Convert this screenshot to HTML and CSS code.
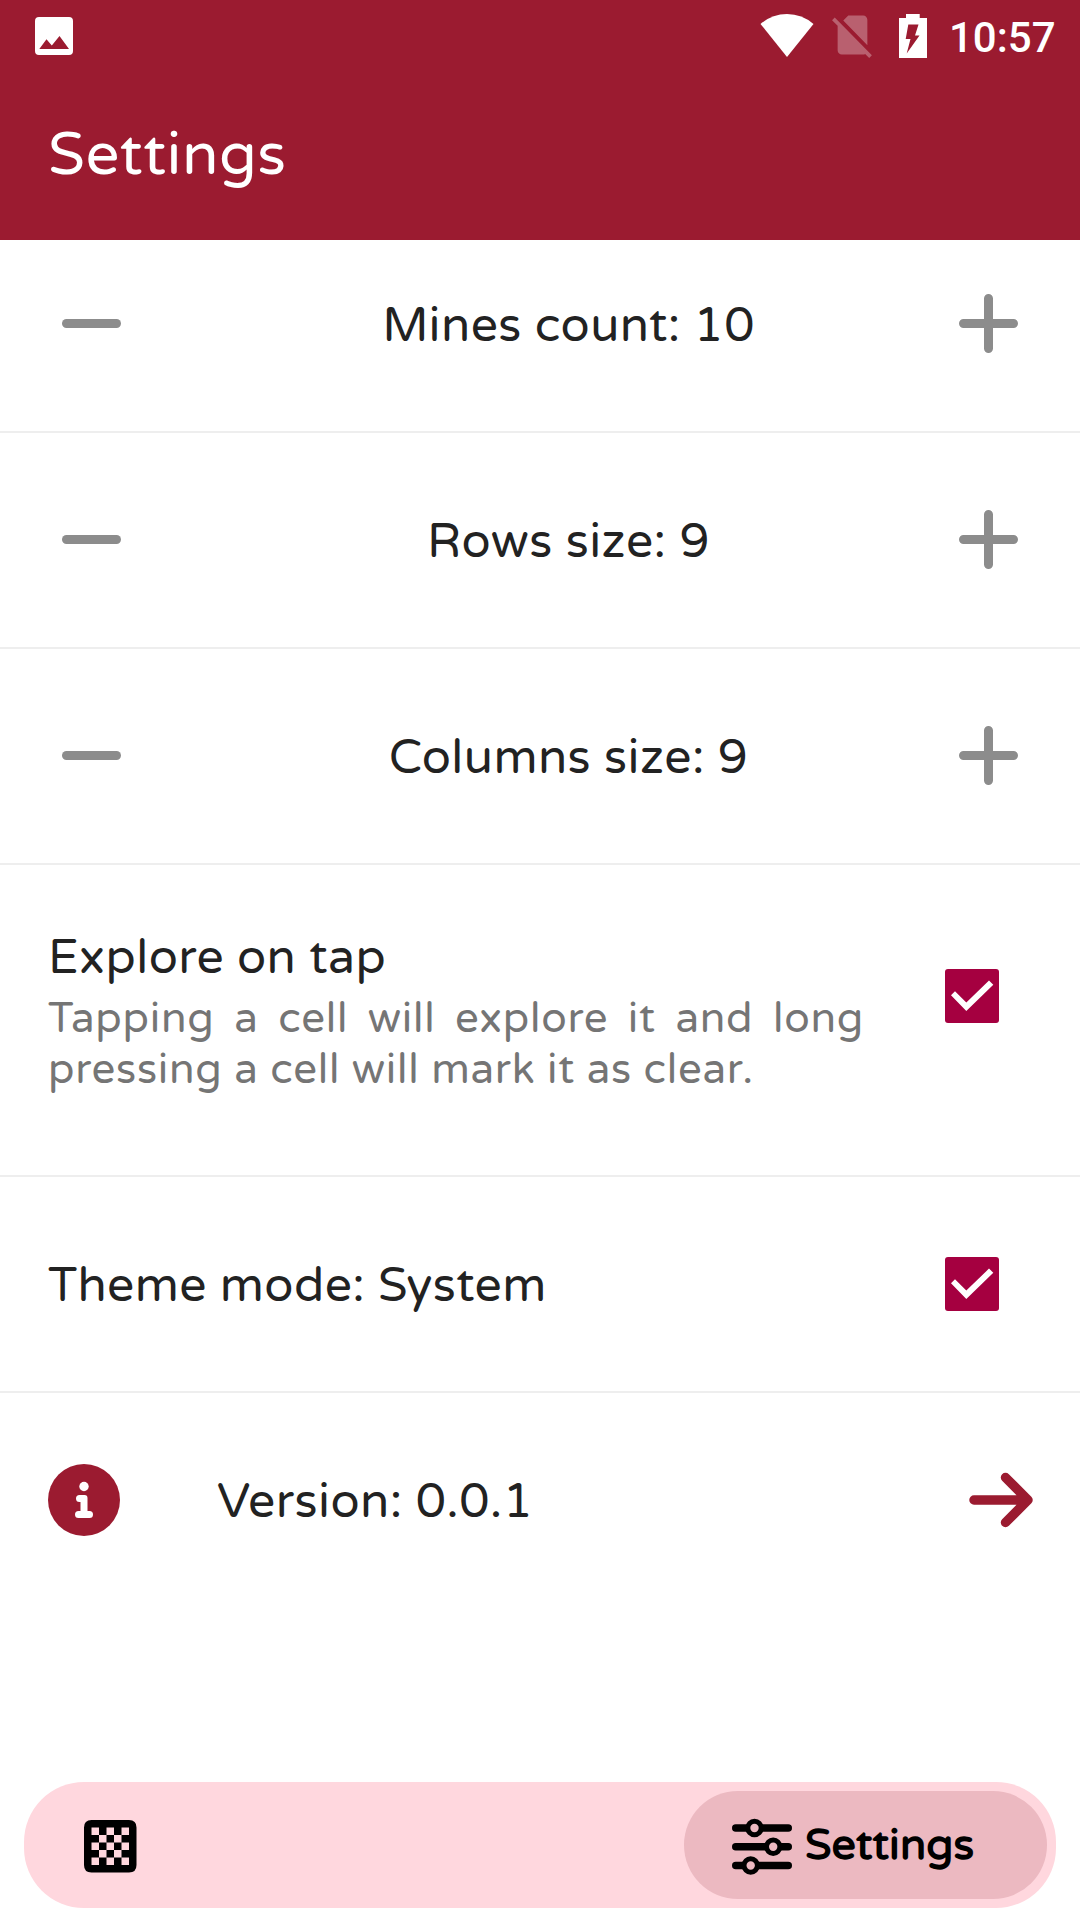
FILE: index.html
```html
<!DOCTYPE html>
<html lang="en">
<head>
<meta charset="utf-8">
<title>Settings</title>
<link rel="stylesheet" href="styles.css">
</head>
<body>
<div class="screen">
  <header class="app-bar">
    <div class="status-bar">
      <svg class="icon-photo" width="38" height="38" viewBox="0 0 38 38"><path fill="#fff" fill-rule="evenodd" d="M4 0H34Q38 0 38 4V34Q38 38 34 38H4Q0 38 0 34V4Q0 0 4 0ZM4.300 32H34L24.500 19L16.800 28.500L11.500 22.300Z"/></svg>
      <div class="status-right">
        <svg class="icon-wifi" width="54" height="43" viewBox="0 0 54 43"><path fill="#fff" d="M0.500 10Q12 0 27 0T53.500 10L27 43Z"/></svg>
        <svg class="icon-sim" width="51" height="52" viewBox="0 0 24 24" preserveAspectRatio="none"><path fill="#fff" d="M18.990 5c0-1.100-.890-2-1.990-2h-7L7.660 5.340 19 16.680 18.990 5zM3.650 3.880L2.380 5.150 5 7.770V19c0 1.100.900 2 2 2h10.010c.350 0 .670-.100.960-.260l1.880 1.880 1.270-1.270L3.650 3.880z"/></svg>
        <svg class="icon-battery" width="28" height="44" viewBox="0 0 28 44"><path fill="#fff" fill-rule="evenodd" d="M7 0H20.700V4H28V44H0V4H7ZM9.300 10.500L6.700 25H11.500L7.700 39.500L20.500 21.500H16L19.500 10.500Z"/></svg>
        <span class="clock">10:57</span>
      </div>
    </div>
    <h1 class="title">Settings</h1>
  </header>

  <main class="viewport">
    <div class="list">
      <div class="row stepper">
        <svg width="59" height="59" viewBox="0 0 59 59"><path class="step" d="M4.500 29.500H54.500"/></svg>
        <span class="label">Mines count: 10</span>
        <svg width="59" height="59" viewBox="0 0 59 59"><path class="step" d="M4.500 29.500H54.500M29.500 4.500V54.500"/></svg>
      </div>
      <div class="row stepper">
        <svg width="59" height="59" viewBox="0 0 59 59"><path class="step" d="M4.500 29.500H54.500"/></svg>
        <span class="label">Rows size: 9</span>
        <svg width="59" height="59" viewBox="0 0 59 59"><path class="step" d="M4.500 29.500H54.500M29.500 4.500V54.500"/></svg>
      </div>
      <div class="row stepper">
        <svg width="59" height="59" viewBox="0 0 59 59"><path class="step" d="M4.500 29.500H54.500"/></svg>
        <span class="label">Columns size: 9</span>
        <svg width="59" height="59" viewBox="0 0 59 59"><path class="step" d="M4.500 29.500H54.500M29.500 4.500V54.500"/></svg>
      </div>
      <div class="row option tall">
        <div class="copy">
          <span class="label">Explore on tap</span>
          <p class="hint">Tapping a cell will explore it and long pressing a cell will mark it as clear.</p>
        </div>
        <svg class="check" width="54" height="54" viewBox="0 0 54 54"><rect width="54" height="54" rx="3" fill="#a50040"/><path fill="#fff" d="M6 26.300L10 22.300L21.300 33.500L44 11.600L48.300 15.700L21.300 42Z"/></svg>
      </div>
      <div class="row option">
        <span class="label">Theme mode: System</span>
        <svg class="check" width="54" height="54" viewBox="0 0 54 54"><rect width="54" height="54" rx="3" fill="#a50040"/><path fill="#fff" d="M6 26.300L10 22.300L21.300 33.500L44 11.600L48.300 15.700L21.300 42Z"/></svg>
      </div>
      <div class="row about">
        <svg width="72" height="72" viewBox="0 0 72 72"><circle cx="36" cy="36" r="36" fill="#9b1b30"/><circle cx="36" cy="22.500" r="4.700" fill="#fff"/><path fill="#fff" d="M31.500 31H36.500Q39.500 31 39.500 34V47H41.500Q45 47 45 50.500T41.500 54H30.500Q27 54 27 50.500T30.500 47H32.500V38H31.500Q28 38 28 34.500T31.500 31Z"/></svg>
        <span class="label">Version: 0.0.1</span>
        <svg width="64" height="56" viewBox="0 0 64 56"><path class="arrow" d="M5 28H59M36.500 5.500L59 28L36.500 50.500"/></svg>
      </div>
    </div>
  </main>

  <nav class="nav">
    <svg class="icon-board" width="52.500" height="52.500" viewBox="0 0 7 7"><path fill-rule="evenodd" d="M1 0H6Q7 0 7 1V6Q7 7 6 7H1Q0 7 0 6V1Q0 0 1 0ZM1 1v1h1v-1zM3 1v1h1v-1zM5 1v1h1v-1zM2 2v1h1v-1zM4 2v1h1v-1zM1 3v1h1v-1zM3 3v1h1v-1zM5 3v1h1v-1zM2 4v1h1v-1zM4 4v1h1v-1zM1 5v1h1v-1zM3 5v1h1v-1zM5 5v1h1v-1z"/></svg>
    <div class="nav-active">
      <svg class="icon-sliders" width="60" height="58" viewBox="0 0 60 58"><path class="slider" d="M3.750 10H56.250M3.750 28.700H56.250M3.750 47.500H56.250"/><g class="knobs"><circle cx="22.500" cy="10" r="6.700"/><circle cx="41.200" cy="28.700" r="6.700"/><circle cx="18.700" cy="47.500" r="6.700"/></g></svg>
      <span class="nav-label">Settings</span>
    </div>
  </nav>
</div>
</body>
</html>
```
FILE: styles.css
```css
* { box-sizing: border-box; }
body { margin: 0; background: #fff; }
svg { display: block; flex: none; }

.screen {
  width: 1080px;
  height: 1920px;
  display: flex;
  flex-direction: column;
  overflow: hidden;
  background: #fff;
  font-family: "Varela Round", "Noto Sans", sans-serif;
  color: #222;
}

.app-bar { height: 240px; flex: none; background: #9b1b30; color: #fff; }
.status-bar {
  height: 72px;
  display: flex;
  justify-content: space-between;
  align-items: flex-start;
  padding: 0 24px 0 35px;
}
.status-right { display: flex; align-items: flex-start; }
.icon-photo { margin-top: 17px; }
.icon-wifi { margin-top: 14px; }
.icon-sim { margin: 9px 21px 0 13px; opacity: .3; }
.icon-battery { margin-top: 14px; }
.clock {
  width: 107px;
  margin: 14px 0 0 22px;
  font: 500 42px/48px Roboto, sans-serif;
  white-space: nowrap;
}
.title {
  margin: 0;
  padding: 47px 0 0 48px;
  font-size: 60px;
  line-height: 72px;
  font-weight: 400;
  letter-spacing: .45px;
}

.viewport { flex: 1; overflow: hidden; }
.list { margin-top: -23px; }
.row {
  height: 216px;
  display: flex;
  align-items: center;
  border-bottom: 2px solid #eee;
}
.label {
  font-size: 48px;
  line-height: 56px;
  letter-spacing: .45px;
  padding-top: 4px;
  white-space: nowrap;
}
.stepper { padding: 0 62px; }
.stepper svg { margin-bottom: 2px; }
.stepper .label { flex: 1; padding-left: 57px; text-align: center; }
.step { fill: none; stroke: #8c8c8c; stroke-width: 9; stroke-linecap: round; }

.option { justify-content: space-between; padding: 0 81px 0 48px; }
.tall { height: 312px; align-items: flex-start; }
.tall .check { margin-top: 104px; }
.copy { width: 816px; padding-top: 61px; display: flex; flex-direction: column; }
.hint {
  margin: 7px 0 0;
  font-size: 42px;
  line-height: 51px;
  letter-spacing: .75px;
  text-align: justify;
  color: #757575;
}

.about { padding: 0 47px 0 48px; border-bottom: 0; }
.about svg { margin-bottom: 2px; }
.about .label { flex: 1; padding: 2px 0 0 97px; }
.arrow { fill: none; stroke: #9b1b30; stroke-width: 9.5; stroke-linecap: round; stroke-linejoin: round; }

.nav {
  height: 126px;
  flex: none;
  margin: 0 24px 12px;
  padding: 0 9px 0 60px;
  display: flex;
  justify-content: space-between;
  align-items: center;
  border-radius: 60px;
  background: #ffd7de;
}
.icon-board { margin-top: 3px; }
.nav-active {
  width: 363px;
  height: 108px;
  padding-left: 48px;
  display: flex;
  align-items: center;
  border-radius: 54px;
  background: #ecb9c1;
  color: #000;
}
.icon-sliders { margin-top: 3px; }
.slider { fill: none; stroke: #000; stroke-width: 7.5; stroke-linecap: round; }
.knobs { fill: #ecb9c1; stroke: #000; stroke-width: 5; }
.nav-label {
  margin-left: 13px;
  padding-top: 1px;
  font-size: 43px;
  line-height: 54px;
  font-weight: 700;
  letter-spacing: .1px;
}
```
